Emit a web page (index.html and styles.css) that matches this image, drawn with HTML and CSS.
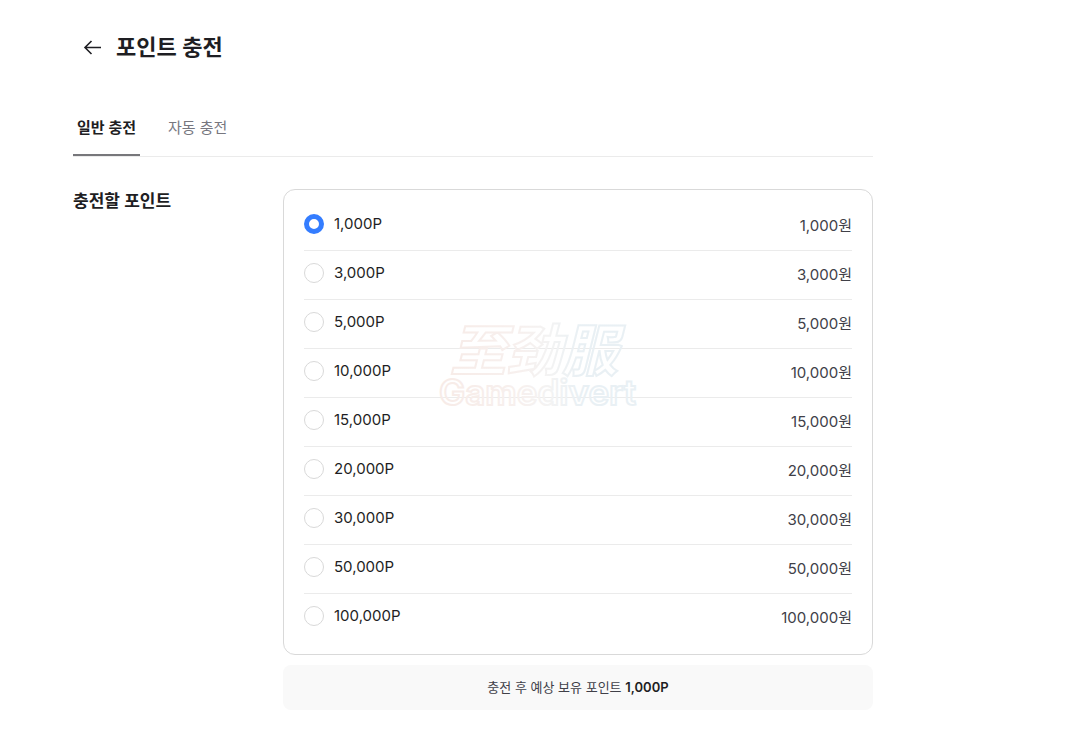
FILE: index.html
```html
<!DOCTYPE html>
<html lang="ko">
<head>
  <meta charset="UTF-8">
  <title>포인트 충전</title>
  <link rel="stylesheet" href="styles.css">
</head>
<body>
  <div class="container">
    <header class="page-header">
      <button type="button" class="back" aria-label="뒤로">
        <svg width="20" height="20" viewBox="0 0 20 20" fill="none" stroke="#1e1e23" stroke-width="1.6">
          <path d="M19 10.500H3M9.500 4L3 10.500l6.500 6.500"/>
        </svg>
      </button>
      <h1>포인트 충전</h1>
    </header>

    <nav class="tabs">
      <a href="#general" class="tab active">일반 충전</a>
      <a href="#auto" class="tab">자동 충전</a>
    </nav>

    <form class="charge">
      <h2>충전할 포인트</h2>
      <div class="content">
        <ul class="options">
          <li><label><input type="radio" name="point" value="1000" checked><span>1,000P</span></label><span class="price">1,000원</span></li>
          <li><label><input type="radio" name="point" value="3000"><span>3,000P</span></label><span class="price">3,000원</span></li>
          <li><label><input type="radio" name="point" value="5000"><span>5,000P</span></label><span class="price">5,000원</span></li>
          <li><label><input type="radio" name="point" value="10000"><span>10,000P</span></label><span class="price">10,000원</span></li>
          <li><label><input type="radio" name="point" value="15000"><span>15,000P</span></label><span class="price">15,000원</span></li>
          <li><label><input type="radio" name="point" value="20000"><span>20,000P</span></label><span class="price">20,000원</span></li>
          <li><label><input type="radio" name="point" value="30000"><span>30,000P</span></label><span class="price">30,000원</span></li>
          <li><label><input type="radio" name="point" value="50000"><span>50,000P</span></label><span class="price">50,000원</span></li>
          <li><label><input type="radio" name="point" value="100000"><span>100,000P</span></label><span class="price">100,000원</span></li>
        </ul>
        <p class="summary">충전 후 예상 보유 포인트 <strong>1,000P</strong></p>

        <svg class="watermark" width="224" height="120" viewBox="0 0 224 120">
          <defs>
            <linearGradient id="tint" gradientUnits="userSpaceOnUse" x1="0" y1="0" x2="204" y2="0">
              <stop offset="0" stop-color="#f7ebe7"/>
              <stop offset="0.4" stop-color="#f7f0ee"/>
              <stop offset="0.55" stop-color="#f3f3f3"/>
              <stop offset="0.7" stop-color="#e9f0f4"/>
              <stop offset="1" stop-color="#e9f0f4"/>
            </linearGradient>
          </defs>
          <text class="mark-cjk" x="12" y="67">至劲服</text>
          <text class="mark-latin" x="1" y="101">Gamedivert</text>
        </svg>
      </div>
    </form>
  </div>
</body>
</html>
```

FILE: styles.css
```css
* { box-sizing: border-box; }
body { margin: 0; background: #fff; color: #1e1e23; font-family: Inter, "Noto Sans CJK KR", sans-serif; font-size: 15px; line-height: 24px; }
h1, h2, p, ul { margin: 0; padding: 0; }

.container { max-width: 873px; padding: 31px 0 20px 73px; }

.page-header { display: flex; align-items: center; gap: 14px; padding-left: 9px; }
.back { display: flex; padding: 0; border: 0; background: none; cursor: pointer; }
h1 { font-size: 22px; line-height: 32px; font-weight: 600; }

.tabs { display: flex; gap: 24px; margin-top: 40px; border-bottom: 1px solid #ebebeb; }
.tab { padding: 13px 4px 14px; border-bottom: 2px solid transparent; color: #77777f; text-decoration: none; }
.tab.active { border-color: #77777b; color: #1e1e23; font-weight: 600; }

.charge { display: flex; margin-top: 32px; }
h2 { flex: 0 0 210px; font-size: 17px; line-height: 24px; font-weight: 600; }
.content { position: relative; flex: 1; }

.options { padding: 12px 20px 11px; border: 1px solid #d9d9d9; border-radius: 12px; list-style: none; }
.options li { display: flex; justify-content: space-between; height: 49px; padding-top: 10px; border-bottom: 1px solid #ebebeb; }
.options li:last-child { border-bottom: 0; }
.options label { display: flex; align-items: center; gap: 10px; height: 24px; cursor: pointer; }
.options input { appearance: none; width: 20px; height: 20px; margin: 0; border: 1px solid #d9d9d9; border-radius: 50%; background: #fff; }
.options input:checked { border: 5px solid #347dff; }
.price { padding-top: 2px; color: #404048; }

.summary { margin-top: 10px; padding: 10px; border-radius: 8px; background: #f9f9f9; color: #404048; font-size: 13px; line-height: 25px; text-align: center; }
.summary strong { color: #1e1e23; font-weight: 600; }

.watermark { position: absolute; top: 115px; left: 155px; overflow: visible; pointer-events: none; }
.watermark text { fill: none; stroke: url(#tint); stroke-width: 2; }
.mark-cjk { font: italic 700 56px "Noto Sans CJK SC", sans-serif; }
.mark-latin { font: 600 35px Inter, sans-serif; }
```
